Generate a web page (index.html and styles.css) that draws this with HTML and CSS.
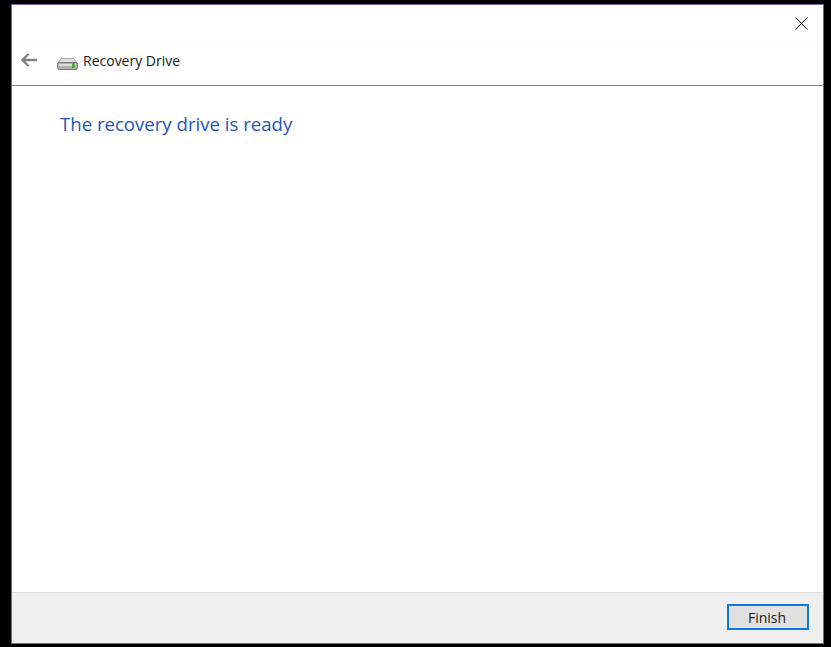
FILE: index.html
```html
<!DOCTYPE html>
<html lang="en">
<head>
  <meta charset="UTF-8" />
  <title>Recovery Drive</title>
  <link rel="stylesheet" href="styles.css">
</head>
<body>
  <div class="window">
    <div class="title-bar">
      <svg class="close-icon" width="13" height="13" viewBox="0 0 13 13">
        <path d="M0.5 0.5 L12.5 12.5 M12.5 0.5 L0.5 12.5" stroke="#000" stroke-width="1" fill="none" />
      </svg>
    </div>
    <div class="nav-bar">
      <svg class="back-icon" width="16" height="14" viewBox="0 0 16 14">
        <path d="M7.5 1 L1.5 7 L7.5 13 M1.5 7 L16 7" stroke="#808080" stroke-width="2.4" fill="none" />
      </svg>
      <svg class="drive-icon" width="21" height="12" viewBox="0 0 21 12">
        <path d="M4 0.5 H17 L20.5 6 H0.5 Z" fill="#e2e2e2" stroke="#a8a8a8" stroke-width="1" />
        <rect x="0.5" y="4.5" width="20" height="7" rx="2" fill="#b0b0b0" stroke="#777" stroke-width="1" />
        <rect x="2" y="6" width="17" height="2" fill="#dcdcdc" />
        <rect x="15" y="5" width="3" height="5" fill="#4caf2f" />
      </svg>
      <span class="nav-title">Recovery Drive</span>
    </div>
    <div class="content">
      <h1 class="heading">The recovery drive is ready</h1>
    </div>
    <div class="footer">
      <button class="finish-btn">Finish</button>
    </div>
  </div>
</body>
</html>
```

FILE: styles.css
```css
html, body {
  height: 100%;
}
body {
  margin: 0;
  box-sizing: border-box;
  padding: 4px 7px 3px 11px;
  background: #000;
  font-family: "Open Sans", "Noto Sans", sans-serif;
}
.window {
  height: 100%;
  box-sizing: border-box;
  display: flex;
  flex-direction: column;
  border: 1px solid #7a5fb0;
  background: #fff;
}
.title-bar {
  height: 38px;
  display: flex;
  justify-content: flex-end;
  align-items: flex-start;
  padding: 12px 15px 0 0;
  box-sizing: border-box;
}
.nav-bar {
  height: 41px;
  display: flex;
  align-items: center;
  padding-left: 9px;
  border-top: 1px solid #fbfbfb;
  border-bottom: 1px solid #808080;
}
.back-icon {
  margin-right: 20px;
  margin-top: -10px;
}
.drive-icon {
  margin-right: 5px;
  margin-top: -2px;
}
.nav-title {
  font-size: 14px;
  color: #1a1a1a;
  margin-top: -9px;
}
.content {
  flex: 1;
  padding: 24px 0 0 48px;
}
.heading {
  margin: 0;
  font-size: 18.6px;
  font-weight: 400;
  line-height: 28px;
  color: #2456b8;
}
.footer {
  height: 51px;
  box-sizing: border-box;
  display: flex;
  justify-content: flex-end;
  align-items: flex-start;
  padding: 11px 14px 0 0;
  background: #efefef;
  border-top: 1px solid #dfdfdf;
}
.finish-btn {
  width: 82px;
  height: 26px;
  padding: 0 2px 0 0;
  background: #e1e1e1;
  border: 2px solid #0a7ad9;
  font-family: inherit;
  font-size: 14px;
  color: #1a1a1a;
}
```
